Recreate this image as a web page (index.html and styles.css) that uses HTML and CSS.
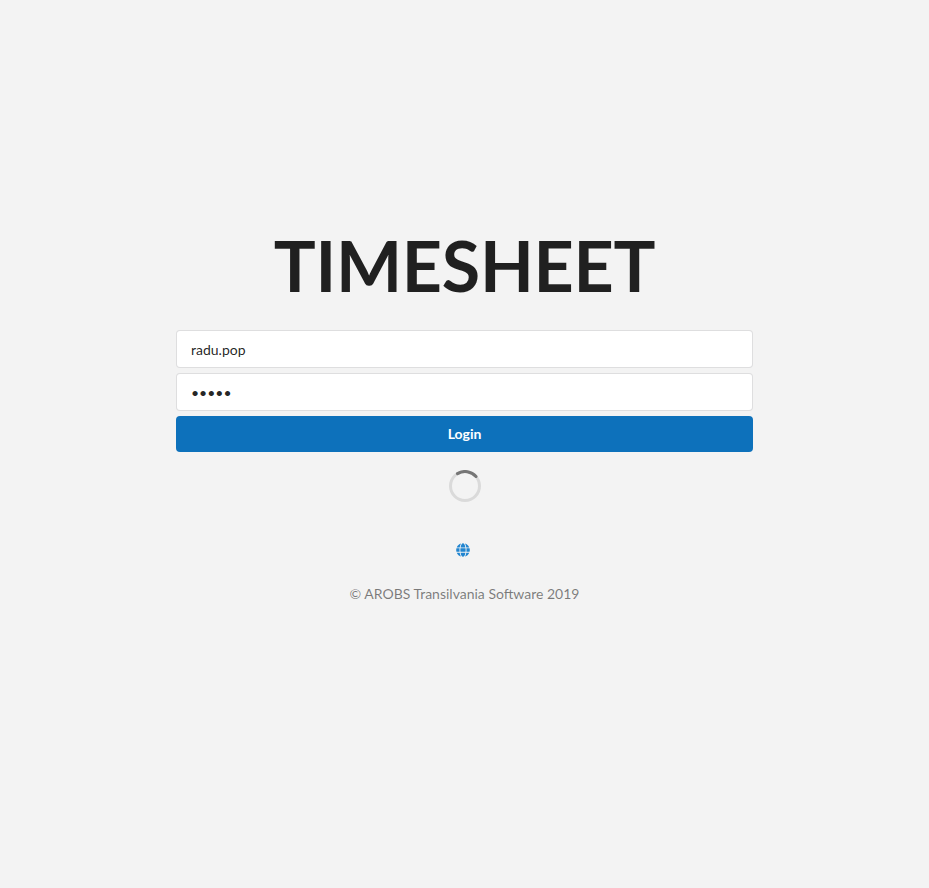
FILE: index.html
```html
<!DOCTYPE html>
<html lang="en">
<head>
<meta charset="utf-8">
<title>Timesheet</title>
<link rel="stylesheet" href="styles.css">
</head>
<body>
<main class="login">
  <h1 class="title">TIMESHEET</h1>
  <form class="form">
    <input class="field" type="text" value="radu.pop" aria-label="Username">
    <input class="field" type="password" value="12345" aria-label="Password">
    <button class="button" type="button">Login</button>
  </form>
  <svg class="loader" viewBox="0 0 32 32" aria-hidden="true">
    <circle class="track" cx="16" cy="16" r="14.5"/>
    <path class="arc" d="M8.5 3.6A14.5 14.5 0 0 1 27 6.5"/>
  </svg>
  <a class="language" href="#" aria-label="Language">
    <svg class="globe" viewBox="0 0 496 512" aria-hidden="true">
      <path d="M336.5 160C322 70.7 287.8 8 248 8s-74 62.7-88.5 152h177zM152 256c0 22.2 1.2 43.5 3.3 64h185.3c2.1-20.5 3.3-41.8 3.3-64s-1.2-43.5-3.3-64H155.3c-2.1 20.5-3.3 41.8-3.3 64zm324.7-96c-28.6-67.9-86.5-120.4-158-141.6 24.4 33.8 41.2 84.7 50 141.6h108zM177.2 18.4C105.8 39.6 47.8 92.1 19.3 160h108c8.7-56.9 25.5-107.8 49.9-141.6zM487.4 192H372.7c2.1 21 3.3 42.5 3.3 64s-1.2 43-3.3 64h114.6c5.5-20.5 8.6-41.8 8.6-64s-3.1-43.5-8.5-64zM120 256c0-21.5 1.2-43 3.3-64H8.6C3.2 212.5 0 233.8 0 256s3.2 43.5 8.6 64h114.6c-2-21-3.2-42.5-3.2-64zm39.5 96c14.5 89.3 48.7 152 88.5 152s74-62.7 88.5-152h-177zm159.3 141.6c71.4-21.2 129.4-73.7 158-141.6h-108c-8.8 56.9-25.6 107.8-50 141.6zM19.3 352c28.6 67.9 86.5 120.4 158 141.6-24.4-33.8-41.2-84.7-50-141.6h-108z"/>
    </svg>
  </a>
  <p class="copyright">© AROBS Transilvania Software 2019</p>
</main>
</body>
</html>
```
FILE: styles.css
```css
* { box-sizing: border-box; }
body {
  margin: 0;
  min-height: 888px;
  background: #f3f3f3;
  font: 14px/20px Lato, sans-serif;
  color: rgba(0, 0, 0, .87);
}
.login {
  width: 577px;
  margin: 0 auto;
  padding-top: 220px;
  display: flex;
  flex-direction: column;
  align-items: center;
}
.title {
  margin: 0 0 20px;
  font-size: 70px;
  line-height: 90px;
  font-weight: 700;
  letter-spacing: -.3px;
}
.form {
  width: 100%;
  display: flex;
  flex-direction: column;
  gap: 5px;
}
.field {
  height: 38px;
  padding: 9px 14px;
  border: 1px solid rgba(34, 36, 38, .15);
  border-radius: 4px;
  background: #fff;
  color: rgba(0, 0, 0, .87);
  font: 14px/17px Lato, sans-serif;
  outline: 0;
}
.button {
  height: 36px;
  padding: 0;
  border: 0;
  border-radius: 4px;
  background: #0d71bb;
  color: #fff;
  font: 700 14px/14px Lato, sans-serif;
}
.loader {
  width: 32px;
  height: 32px;
  margin-top: 18px;
  fill: none;
  stroke-width: 3;
}
.track { stroke: #dadada; }
.arc { stroke: #767676; stroke-linecap: round; }
.language {
  display: flex;
  margin: 41px 4px 0 0;
}
.globe {
  width: 14px;
  height: 14px;
  fill: #2185d0;
}
.copyright {
  margin: 27px 0 0;
  color: rgba(0, 0, 0, .5);
}
```
